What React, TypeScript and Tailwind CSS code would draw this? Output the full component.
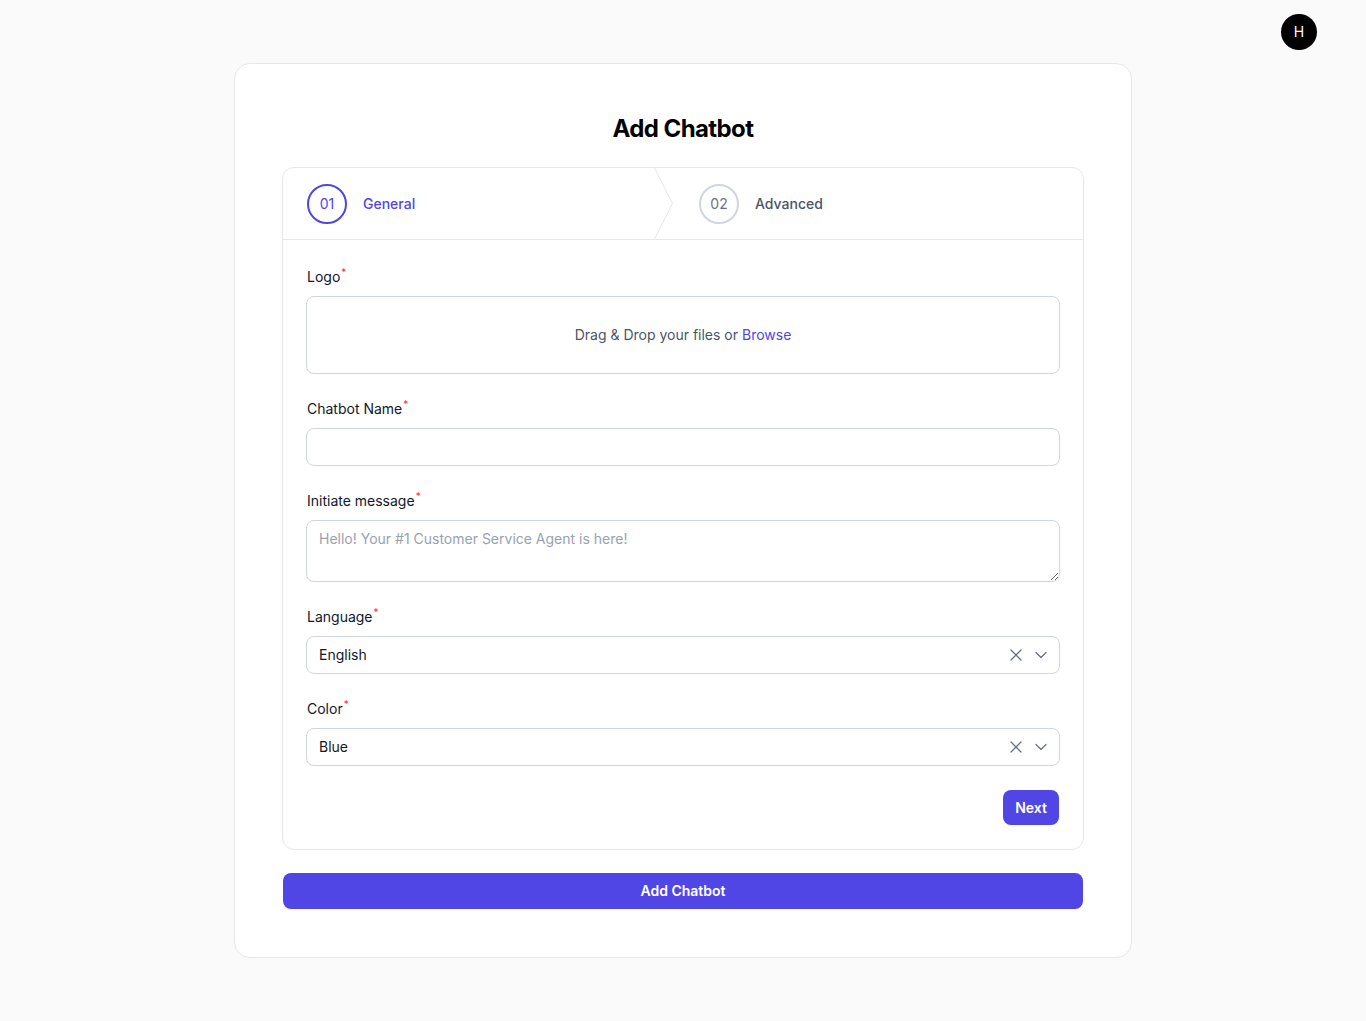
import React from "react";
import { X, ChevronDown } from "lucide-react";

function Label({ children }: { children: React.ReactNode }) {
  return (
    <label className="block text-sm leading-[22px] text-gray-900 mb-2 pl-px">
      {children}
      <span className="relative -top-[6px] ml-px text-[10px] leading-none text-red-500">*</span>
    </label>
  );
}

function SelectBox({ value }: { value: string }) {
  return (
    <div className="h-[38px] w-full rounded-lg border border-gray-300 bg-white flex items-center pl-3 pr-2">
      <span className="flex-1 text-sm text-gray-900">{value}</span>
      <X className="w-5 h-5 text-gray-500 mr-[5px]" strokeWidth={1.5} />
      <ChevronDown className="w-5 h-5 text-gray-500" strokeWidth={1.5} />
    </div>
  );
}

export default function App() {
  return (
    <div
      className="min-h-screen bg-[#fafafa] pb-16"
      style={{ fontFamily: "Inter, 'Noto Sans', sans-serif" }}
    >
      {/* top bar */}
      <div className="flex justify-end pt-[14px] pr-[49px]">
        <div className="w-9 h-9 rounded-full bg-black text-white text-sm flex items-center justify-center">
          H
        </div>
      </div>

      {/* card */}
      <div className="mx-auto mt-[13px] w-[898px] bg-white border border-gray-200 rounded-2xl px-[47px] pt-[49px] pb-12">
        <h1 className="text-2xl font-bold text-center text-black tracking-tight">Add Chatbot</h1>

        <div className="mt-[22px] border border-gray-200 rounded-xl">
          {/* steps */}
          <div className="flex border-b border-gray-200 h-[72px]">
            <div className="w-[390px] flex items-center pl-6 relative">
              <span className="w-10 h-10 rounded-full border-2 border-[#4f46e5] text-[#4f46e5] text-sm flex items-center justify-center">
                01
              </span>
              <span className="ml-4 text-sm font-medium text-[#4f46e5]">General</span>
              <svg
                className="absolute right-0 top-0 h-full w-[19px]"
                viewBox="0 0 19 71"
                fill="none"
                preserveAspectRatio="none"
              >
                <path d="M0.5 0 L18.5 35.5 L0.5 71" stroke="#e5e7eb" strokeWidth="1" />
              </svg>
            </div>
            <div className="flex-1 flex items-center pl-[26px]">
              <span className="w-10 h-10 rounded-full border-2 border-gray-300 text-gray-500 text-sm flex items-center justify-center">
                02
              </span>
              <span className="ml-4 text-sm font-medium text-gray-600">Advanced</span>
            </div>
          </div>

          {/* form */}
          <div className="px-[23px] pt-[26px] pb-6 flex flex-col gap-6">
            <div>
              <Label>Logo</Label>
              <div className="h-[78px] rounded-lg border border-gray-300 flex items-center justify-center text-sm text-gray-600">
                Drag &amp; Drop your files or&nbsp;<span className="text-[#4f46e5]">Browse</span>
              </div>
            </div>

            <div>
              <Label>Chatbot Name</Label>
              <div className="h-[38px] rounded-lg border border-gray-300" />
            </div>

            <div>
              <Label>Initiate message</Label>
              <textarea
                className="block w-full h-[62px] rounded-lg border border-gray-300 px-3 pt-2 text-sm text-gray-900 placeholder:text-gray-400 outline-none resize-y"
                placeholder="Hello! Your #1 Customer Service Agent is here!"
              />
            </div>

            <div>
              <Label>Language</Label>
              <SelectBox value="English" />
            </div>

            <div>
              <Label>Color</Label>
              <SelectBox value="Blue" />
            </div>

            <div className="flex justify-end pr-px">
              <button className="h-[35px] w-14 rounded-lg bg-[#4f46e5] text-white text-sm font-semibold">
                Next
              </button>
            </div>
          </div>
        </div>

        <button className="mt-[23px] block mx-px w-[800px] h-9 rounded-lg bg-[#4f46e5] text-white text-sm font-semibold">
          Add Chatbot
        </button>
      </div>
    </div>
  );
}
